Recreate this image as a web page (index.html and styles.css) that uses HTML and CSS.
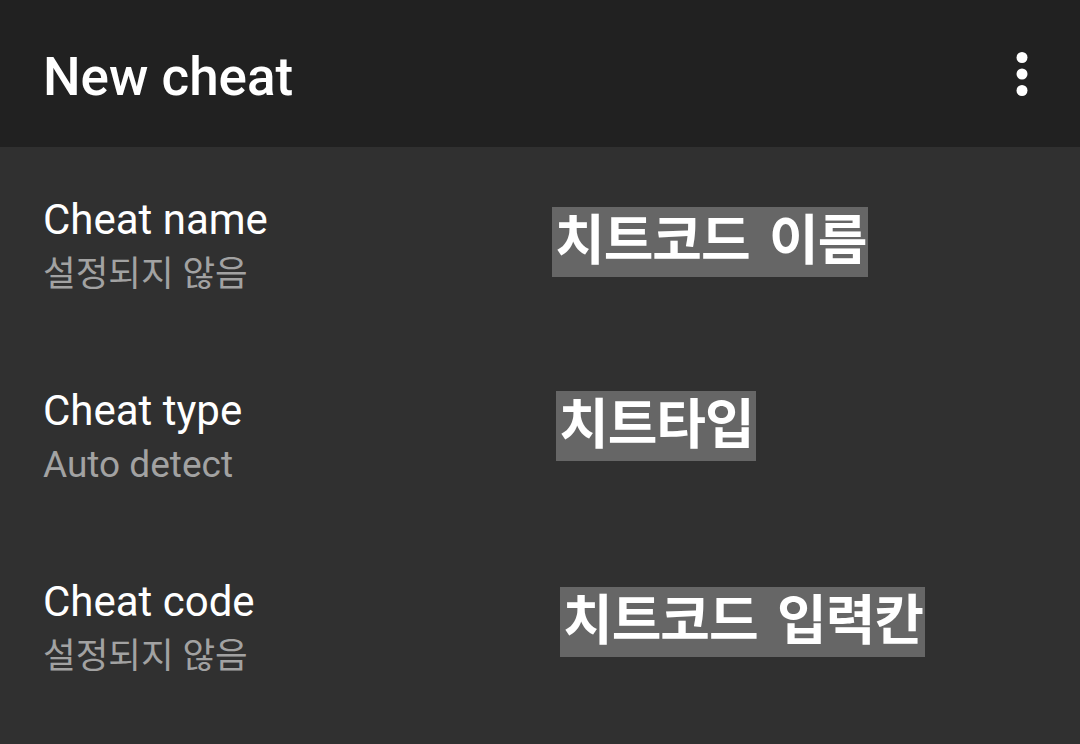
FILE: index.html
```html
<!DOCTYPE html>
<html>
	<head>
		<meta charset="utf-8">
		<title>New cheat</title>
		<link rel="stylesheet" href="styles.css">
	</head>
	<body>
		<header class="toolbar">
			<h1 class="toolbar-title">New cheat</h1>
			<svg class="toolbar-menu" viewBox="0 0 24 24" width="66" height="66">
				<circle cx="12" cy="6" r="2" fill="#fff"/>
				<circle cx="12" cy="12" r="2" fill="#fff"/>
				<circle cx="12" cy="18" r="2" fill="#fff"/>
			</svg>
		</header>
		<main class="prefs">
			<div class="pref">
				<div class="pref-text">
					<div class="pref-title">Cheat name</div>
					<div class="pref-summary pref-summary-ko">설정되지 않음</div>
				</div>
				<span class="note note-name">치트코드 이름</span>
			</div>
			<div class="pref">
				<div class="pref-text">
					<div class="pref-title">Cheat type</div>
					<div class="pref-summary">Auto detect</div>
				</div>
				<span class="note note-type">치트타입</span>
			</div>
			<div class="pref">
				<div class="pref-text">
					<div class="pref-title">Cheat code</div>
					<div class="pref-summary pref-summary-ko">설정되지 않음</div>
				</div>
				<span class="note note-code">치트코드 입력칸</span>
			</div>
		</main>
	</body>
</html>
```

FILE: styles.css
```css
* {
	margin: 0;
	padding: 0;
	box-sizing: border-box;
}
html, body {
	height: 100%;
}
body {
	background: #303030;
	color: #fff;
	font-family: Roboto, "Noto Sans CJK KR", sans-serif;
	overflow: hidden;
}
.toolbar {
	height: 147px;
	background: #212121;
	display: flex;
	align-items: center;
	justify-content: space-between;
	padding: 0 25px 0 43px;
}
.toolbar-title {
	font-size: 53px;
	font-weight: 500;
	line-height: 64px;
	padding-top: 7px;
}
.toolbar-menu {
	display: block;
}
.pref {
	display: flex;
	align-items: flex-start;
	padding: 45px 43px 38px;
}
.pref-text {
	width: 509px;
	flex: none;
}
.pref-title {
	font-size: 42px;
	line-height: 56px;
	color: #fff;
}
.pref-summary {
	font-size: 37px;
	line-height: 52px;
	color: #a2a2a2;
}
.pref-summary-ko {
	font-size: 35.5px;
}
.note {
	background: #666;
	color: #fff;
	font-family: "Noto Sans CJK KR", sans-serif;
	font-weight: 700;
	font-size: 54px;
	letter-spacing: -1px;
	word-spacing: 8px;
	height: 70px;
	line-height: 60px;
	padding: 0 2px 10px 3px;
	white-space: nowrap;
}
.note-name {
	margin-top: 15px;
}
.note-type {
	margin-top: 8px;
	margin-left: 4px;
}
.note-code {
	margin-top: 13px;
	margin-left: 8px;
}
```
